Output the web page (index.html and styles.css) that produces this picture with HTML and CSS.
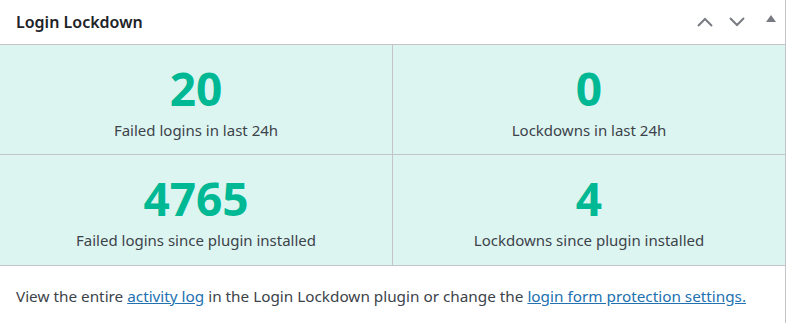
FILE: index.html
```html
<!DOCTYPE html>
<html lang="en">
<head>
  <meta charset="UTF-8" />
  <meta name="viewport" content="width=device-width, initial-scale=1.0"/>
  <title>Login Lockdown</title>
  <link rel="stylesheet" href="styles.css">
</head>
<body>
  <div class="postbox">
    <div class="postbox-header">
      <h2>Login Lockdown</h2>
      <div class="handle-actions">
        <button class="handle" aria-label="Move up">
          <svg width="18" height="18" viewBox="0 0 18 18"><path d="M2 13 L9 6 L16 13" fill="none" stroke="currentColor" stroke-width="2"/></svg>
        </button>
        <button class="handle" aria-label="Move down">
          <svg width="18" height="18" viewBox="0 0 18 18"><path d="M2 5 L9 12 L16 5" fill="none" stroke="currentColor" stroke-width="2"/></svg>
        </button>
        <button class="handle small" aria-label="Toggle panel">
          <svg width="10" height="8" viewBox="0 0 10 8"><path d="M5 0 L10 7 L0 7 Z" fill="currentColor"/></svg>
        </button>
      </div>
    </div>

    <div class="stats">
      <div class="stat">
        <span class="stat-num">20</span>
        <span class="stat-label">Failed logins in last 24h</span>
      </div>
      <div class="stat">
        <span class="stat-num">0</span>
        <span class="stat-label">Lockdowns in last 24h</span>
      </div>
      <div class="stat">
        <span class="stat-num">4765</span>
        <span class="stat-label">Failed logins since plugin installed</span>
      </div>
      <div class="stat">
        <span class="stat-num">4</span>
        <span class="stat-label">Lockdowns since plugin installed</span>
      </div>
    </div>

    <p class="footer">View the entire <a href="#">activity log</a> in the Login Lockdown plugin or change the <a href="#">login form protection settings.</a></p>
  </div>
</body>
</html>
```

FILE: styles.css
```css
body {
  font-family: "Noto Sans", "Open Sans", sans-serif;
  margin: 0;
  background: #fff;
  color: #3c434a;
}
.postbox {
  margin: -1px 2px 0 -1px;
  border: 1px solid #c3c4c7;
  border-bottom: none;
  background: #fff;
  height: 330px;
}
.postbox-header {
  display: flex;
  align-items: center;
  justify-content: space-between;
  height: 44px;
  border-bottom: 1px solid #c3c4c7;
}
.postbox-header h2 {
  margin: 0 0 0 16px;
  font-size: 16px;
  font-weight: 600;
  color: #1d2327;
}
.handle-actions {
  display: flex;
  align-items: center;
  margin-right: 2px;
}
.handle {
  background: none;
  border: none;
  padding: 0;
  width: 32px;
  height: 36px;
  color: #787c82;
  display: flex;
  align-items: center;
  justify-content: center;
  cursor: pointer;
}
.handle.small {
  width: 24px;
  margin-left: 6px;
  padding-bottom: 6px;
}
.stats {
  display: grid;
  grid-template-columns: 393px 1fr;
  background: #ddf5f1;
  border-bottom: 1px solid #c3c4c7;
}
.stat {
  height: 110px;
  display: flex;
  flex-direction: column;
  align-items: center;
  padding-top: 17px;
  box-sizing: border-box;
}
.stat:nth-child(odd) {
  border-right: 1px solid #c3c4c7;
}
.stat:nth-child(-n+2) {
  border-bottom: 1px solid #c3c4c7;
}
.stat-num {
  font-size: 46px;
  font-weight: 700;
  line-height: 52px;
  color: #00b894;
}
.stat-label {
  font-size: 15px;
  line-height: 20px;
  margin-top: 6px;
}
.footer {
  margin: 0;
  padding: 20px 0 0 16px;
  font-size: 15.3px;
  line-height: 20px;
}
.footer a {
  color: #2271b1;
}
```
